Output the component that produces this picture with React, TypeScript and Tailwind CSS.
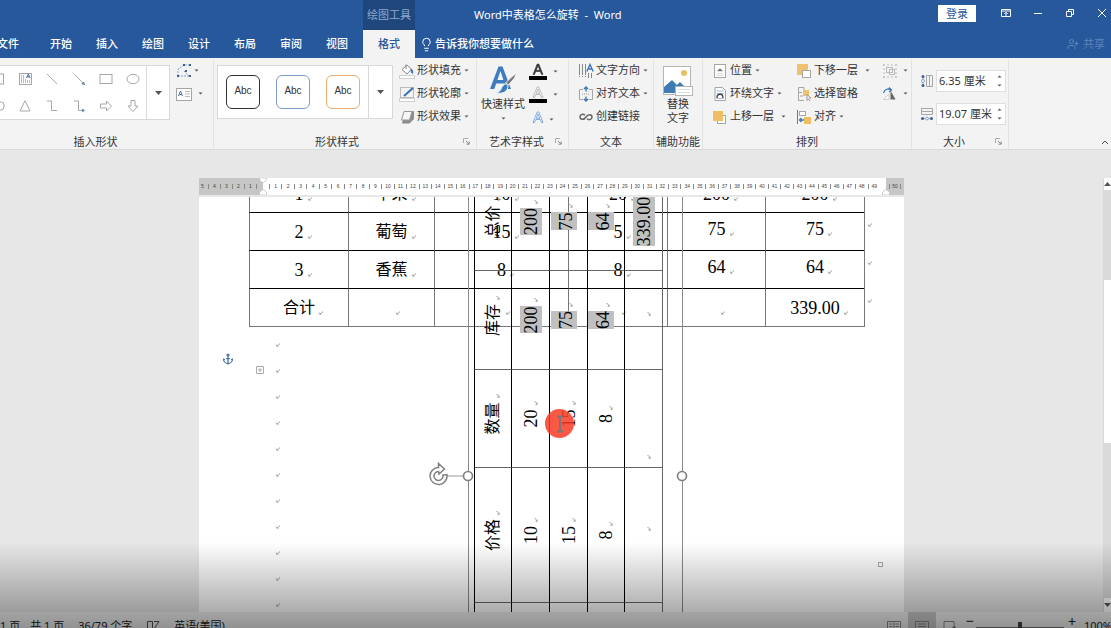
import type { ReactNode } from 'react';
import { Anchor, Lightbulb, UserPlus } from 'lucide-react';

const tabs = ['开始', '插入', '绘图', '设计', '布局', '审阅', '视图'];
const leftTicks = [5, 4, 3, 2, 1];
const rulerTicks = Array.from({ length: 49 }, (_, i) => i + 1);
const paragraphs = Array.from({ length: 12 }, (_, i) => i);

const stockRows = [
  ['1', '苹果', '10', '20', '200', '200'],
  ['2', '葡萄', '15', '5', '75', '75'],
  ['3', '香蕉', '8', '8', '64', '64'],
  ['合计', '', '', '', '', '339.00'],
];

// first column scrolls out of view below the window
const rotatedRows = [
  ['', '价格', '数量', '库存', '总价'],
  ['', '10', '20', '200', '200'],
  ['', '15', '15', '75', '75'],
  ['', '8', '8', '64', '64'],
  ['', '', '', '', '339.00'],
];

function Caret({ className = '' }: { className?: string }) {
  return (
    <svg className={`shrink-0 ${className}`} width="5" height="3" viewBox="0 0 5 3" aria-hidden="true">
      <path d="M0.5 0.5h4L2.5 2.6z" fill="#555" />
    </svg>
  );
}

function BigCaret({ className = '' }: { className?: string }) {
  return (
    <svg className={`shrink-0 ${className}`} width="7" height="4" viewBox="0 0 7 4" aria-hidden="true">
      <path d="M0 0h7L3.5 4z" fill="#555" />
    </svg>
  );
}

function Launcher() {
  return (
    <button aria-label="更多选项" className="absolute right-1.5 bottom-1">
      <svg width="7" height="7" viewBox="0 0 7 7" fill="none" stroke="#aaa">
        <path d="M0.5 5V0.5H5" />
        <path d="M3 3l3 3M6.2 3.5v2.7H3.5" stroke="#888" />
      </svg>
    </button>
  );
}

function Group({ label, className, launcher, children }: { label: string; className: string; launcher?: boolean; children: ReactNode }) {
  return (
    <section className={`relative flex shrink-0 flex-col border-r border-[#e2e2e2] ${className}`}>
      <div className="flex flex-1">{children}</div>
      <h2 className="h-4 text-center leading-[18px]">{label}</h2>
      {launcher && <Launcher />}
    </section>
  );
}

function Item({ icon, label, caret }: { icon: ReactNode; label?: string; caret?: 'near' | 'far' }) {
  return (
    <button className="flex h-[23px] items-center whitespace-nowrap">
      <span className="flex w-[19px] shrink-0 justify-center pr-px">{icon}</span>
      {label}
      {caret && <Caret className={caret === 'far' ? 'ml-[7px]' : 'ml-[3px]'} />}
    </button>
  );
}

function Svg({ children, w = 16, h = 16 }: { children: ReactNode; w?: number; h?: number }) {
  return (
    <svg width={w} height={h} viewBox={`0 0 ${w} ${h}`} fill="none" stroke="#a6a6a6" strokeWidth="1" aria-hidden="true">
      {children}
    </svg>
  );
}

const shapes: ReactNode[] = [
  <rect x="2.5" y="3" width="11" height="10" />,
  <><rect x="2.5" y="2.5" width="12" height="11" /><path d="M4.500 4v8M6.500 4v8M8.500 8v4M10.500 9v3M12.500 9v3" stroke="#bbb" /><path d="M9.500 7l1.800-4L13 7M10 5.800h2.500" stroke="#4a6ea8" /></>,
  <path d="M3 3l10 10" />,
  <><path d="M3 3l9 9" /><path d="M13.500 13.500l-2.500-.8 1.700-1.700z" fill="#7086ad" stroke="#7086ad" /></>,
  <rect x="2" y="3.5" width="12" height="9" />,
  <ellipse cx="8" cy="8" rx="6" ry="4.7" />,
  <rect x="2" y="4" width="12" height="8" rx="3" />,
  <path d="M8 2.8L13 13H3z" />,
  <path d="M3 3h4.500v9.500H13" />,
  <><path d="M3 3h4.500v9.500H12" /><path d="M13.500 12.500l-2-1.200v2.400z" fill="#7086ad" stroke="#7086ad" /></>,
  <path d="M2.500 6h6V3L13.500 8l-5 5v-3h-6z" />,
  <path d="M6 2.500h4v5.500h3L8 13.500 3 8h3z" />,
];

function FillIcon() {
  return (
    <Svg>
      <path d="M3 6.500L8 2l4.500 4L8 11z" fill="#fff" stroke="#888" />
      <path d="M7 6V1.500" stroke="#888" />
      <path d="M12 6c2 1 2 3 1.500 4.500-1-.5-1.500-2-1.500-4.500z" fill="#3d76b8" stroke="#3d76b8" />
      <rect x="0.500" y="12.500" width="15" height="3" fill="#fff" stroke="#d0d0d0" />
    </Svg>
  );
}

function OutlineIcon() {
  return (
    <Svg>
      <rect x="1.500" y="1.500" width="13" height="10" stroke="#bbb" />
      <path d="M5 10l9-8" stroke="#3971b4" strokeWidth="2" />
      <rect x="0.500" y="12.500" width="15" height="3" fill="#fff" stroke="#d0d0d0" />
    </Svg>
  );
}

function EffectIcon() {
  return (
    <Svg>
      <path d="M5 4l10-2v8l-4.500 4.500H3z" fill="#8c8c8c" stroke="none" />
      <path d="M5 2.500h8l-2.500 8.500H2.500z" fill="#f7f7f7" stroke="#999" />
    </Svg>
  );
}

function LetterIcon({ fill, stroke, bar }: { fill: string; stroke: string; bar?: boolean }) {
  return (
    <Svg w={18} h={18}>
      <path d="M4 11.500L8.200 1h1.600l4.200 10.500h-1.500l-1.200-3H6.700l-1.200 3zM7.200 7.300h3.600L9 2.800z" fill={fill} stroke={stroke} strokeWidth="0.600" />
      {bar && <rect x="0" y="13" width="18" height="4" fill="#000" stroke="none" />}
    </Svg>
  );
}

function QuickStyleIcon() {
  return (
    <Svg w={28} h={30}>
      <path d="M1 24L9.500 1.500h4L22 24h-4.400l-1.900-5.500H7.200L5.300 24zM8.400 15h6L11.500 6z" fill="#3d7cc0" stroke="none" />
      <path d="M27.500 8l-2 5-6 7-3-2 6-6z" fill="#777" stroke="#f3f3f3" />
      <path d="M19 20c0 7-5 9-12 8 3-1 4-2 5-4 2-5 5-6 7-4z" fill="#3d7cc0" stroke="#f3f3f3" />
    </Svg>
  );
}

function PictureIcon() {
  return (
    <Svg w={30} h={32}>
      <rect x="0.500" y="1.500" width="27" height="28" fill="#fff" stroke="#b5b5b5" />
      <circle cx="21" cy="8" r="3" fill="#e9bf66" stroke="none" />
      <path d="M1 28V22l8-7 5 5 3-3 8 8v3z" fill="#3e7cb4" stroke="none" />
      <rect x="12.500" y="21.500" width="17" height="9" fill="#fff" stroke="#b5b5b5" />
      <path d="M15 24.500h12M15 27.500h12" stroke="#ddd" />
    </Svg>
  );
}

function TextDirectionIcon() {
  return (
    <Svg>
      <path d="M1.500 1v14M4.500 1v14M7.500 1v14M10.500 10v5M13.500 10v5" stroke="#888" strokeDasharray="11 1 1 1" />
      <path d="M8.800 8.500L12 1.500l3.200 7M10 6h4" stroke="#3d76b8" strokeWidth="1.400" />
    </Svg>
  );
}

function AlignTextIcon() {
  return (
    <Svg>
      <path d="M5 3.500H1.500v10H5M11 3.500h3.500v10H11" />
      <path d="M8 0.500v5M8 10.500v5M6 3l2-2 2 2M6 13l2 2 2-2" stroke="#3d76b8" strokeWidth="1.400" />
      <path d="M4 8h8" stroke="#999" strokeDasharray="1 1" />
    </Svg>
  );
}

function LinkIcon() {
  return (
    <Svg>
      <path d="M7 6.200C5.500 4.800 2 5 2 8s4 3.200 6 0 6-3 6 0-3.500 3.200-5 1.800" stroke="#666" strokeWidth="1.500" />
    </Svg>
  );
}

function PositionIcon({ wrap }: { wrap?: boolean }) {
  return (
    <Svg>
      {wrap ? (
        <>
          <path d="M3 1.500h7.500l3 3v10H3z" fill="#fff" />
          <path d="M4.500 5h7M4.500 7.500h7M4.500 10h7M4.500 12.500h7" stroke="#9fb7d8" />
          <path d="M5 12c0-5 6-5 6 0" fill="#fff" stroke="#444" strokeWidth="1.300" />
        </>
      ) : (
        <>
          <rect x="2.500" y="1.500" width="11" height="13" fill="#fff" />
          <path d="M5.500 8h5L8 5.500z" fill="#666" stroke="#888" strokeWidth="0.500" />
          <path d="M4.500 10.500h7M4.500 12.500h7" stroke="#ddd" />
        </>
      )}
    </Svg>
  );
}

function LayerIcon({ forward }: { forward?: boolean }) {
  return (
    <Svg>
      {forward ? (
        <>
          <rect x="5.500" y="6.500" width="8" height="8" fill="#fff" />
          <rect x="1" y="2" width="10" height="10" fill="#efbe62" stroke="none" />
        </>
      ) : (
        <>
          <rect x="1" y="1" width="11" height="11" fill="#efc271" stroke="none" />
          <rect x="6.500" y="7.500" width="8" height="7" fill="#fff" />
        </>
      )}
    </Svg>
  );
}

function SelectionPaneIcon() {
  return (
    <Svg>
      <path d="M8 1.500H2.500v5H6M2.500 6.500v8H8M8 1.500V4M4 10h3" />
      <rect x="7" y="4" width="6" height="6" fill="#efc271" stroke="none" />
      <path d="M11 8.500v6l1.500-1.500L14 15M11 8.500l4 3.500h-2.500" fill="#fff" stroke="#999" />
    </Svg>
  );
}

function AlignIcon() {
  return (
    <Svg>
      <path d="M1.500 1v14" stroke="#777" />
      <rect x="3.500" y="2.500" width="6" height="4" fill="#fff" />
      <path d="M8 11H3.500M5.500 9l-2 2 2 2" stroke="#3d76b8" strokeWidth="1.300" />
      <rect x="8" y="8" width="7" height="7" fill="#efbe62" stroke="none" />
    </Svg>
  );
}

function GroupIcon() {
  return (
    <Svg>
      <path d="M2 1v14M14 1v14M1 2h14M1 14h14" stroke="#bbb" strokeDasharray="2 2" />
      <rect x="4.500" y="4.500" width="6" height="5" stroke="#bbb" />
      <rect x="7.500" y="6.500" width="5" height="5" stroke="#bbb" />
    </Svg>
  );
}

function RotateIcon() {
  return (
    <Svg>
      <path d="M1.500 7c1-4 5-5 8-3M7 1.500l2.500 2.500L7 6" stroke="#3d76b8" strokeWidth="1.300" />
      <path d="M7 13.500H1.500L7 8z" fill="#fff" stroke="#ccc" />
      <path d="M8.500 4.500v9h5z" fill="#666" stroke="none" />
    </Svg>
  );
}

function SizeField({ id, label, value, wide }: { id: string; label: string; value: string; wide?: boolean }) {
  return (
    <div className="flex items-center">
      <label htmlFor={id} aria-label={label} className="mr-0.5">
        <Svg w={14} h={14}>
          {wide ? (
            <>
              <path d="M1.500 7.500v-6h11v6zM1.500 4.500h11" />
              <path d="M2 11.500h10" stroke="#8ba3c4" />
              <circle cx="2.500" cy="11.500" r="1.500" fill="#3f5f8f" stroke="none" />
              <circle cx="7" cy="11.500" r="1.500" fill="#fff" stroke="#8ba3c4" />
              <circle cx="11.500" cy="11.500" r="1.500" fill="#3f5f8f" stroke="none" />
            </>
          ) : (
            <>
              <path d="M6.500 1.500h6v11h-6zM9.500 1.500v11" />
              <path d="M3 2v10" stroke="#8ba3c4" />
              <circle cx="3" cy="2.500" r="1.500" fill="#3f5f8f" stroke="none" />
              <circle cx="3" cy="7" r="1.500" fill="#fff" stroke="#8ba3c4" />
              <circle cx="3" cy="11.500" r="1.500" fill="#3f5f8f" stroke="none" />
            </>
          )}
        </Svg>
      </label>
      <div className="flex h-[22px] w-[70px] border border-[#dedede] bg-white">
        <input id={id} type="text" defaultValue={value} className="w-[56px] pl-0.5 outline-none" />
        <div className="flex flex-1 flex-col items-center justify-center gap-1.5">
          <button aria-label="增大"><Caret className="rotate-180" /></button>
          <button aria-label="减小"><Caret /></button>
        </div>
      </div>
    </div>
  );
}

// paragraph mark shown after every run of text
function Mark() {
  return (
    <svg width="4" height="4" viewBox="0 0 4 4" fill="none" stroke="#999" strokeWidth="0.8" aria-hidden="true">
      <path d="M3.600 0.400v0.900L0.900 2.900M0.600 1.500v1.700h1.900" />
    </svg>
  );
}

function Run({ text, className = '' }: { text: string; className?: string }) {
  const size = /[0-9]/.test(text) ? 'text-lg' : 'text-base';
  return (
    <span className={`relative inline-block min-h-[22px] align-middle leading-[22px] ${size} ${className}`}>
      {text}
      <span className="absolute bottom-1 left-full ml-1"><Mark /></span>
    </span>
  );
}

function TitleBar() {
  return (
    <div className="flex h-[30px] items-center">
      <div className="ml-[363px] flex h-full w-[52px] items-center justify-center bg-[#1f477d] text-[#8fa9cf]">绘图工具</div>
      <h1 className="ml-[59px] whitespace-pre">Word中表格怎么旋转  -  Word</h1>
      <div className="ml-auto flex items-center pb-1">
        <button className="h-[17px] w-[38px] bg-white leading-[17px] text-[#2a579a]">登录</button>
        <button aria-label="功能区显示选项" className="ml-6">
          <svg width="12" height="12" viewBox="0 0 12 12" fill="none" stroke="#fff"><path d="M1.500 2.500h9v7h-9zM1.500 4h9M6 9V5.500M4.300 7L6 5.300 7.700 7" /></svg>
        </button>
        <button aria-label="最小化" className="ml-5">
          <svg width="12" height="12" viewBox="0 0 12 12" stroke="#fff"><path d="M2 6.500h8" /></svg>
        </button>
        <button aria-label="还原" className="ml-5">
          <svg width="12" height="12" viewBox="0 0 12 12" fill="none" stroke="#fff"><path d="M2.500 4.500h5v5h-5zM4.500 4.500v-2h5v5h-2" /></svg>
        </button>
        <button aria-label="关闭" className="mr-[3px] ml-5">
          <svg width="12" height="12" viewBox="0 0 12 12" stroke="#fff"><path d="M2 2l8 8M10 2l-8 8" /></svg>
        </button>
      </div>
    </div>
  );
}

function TabRow() {
  return (
    <nav className="flex h-7 items-center font-medium">
      <button className="w-[38px] text-left"><span className="-ml-[3px]">文件</span></button>
      {tabs.map((tab) => (
        <button key={tab} className="h-full w-[46px]">{tab}</button>
      ))}
      <button className="ml-[3px] h-full w-[52px] bg-[#f3f3f3] text-[#2a579a]">格式</button>
      <button className="ml-1 flex items-center gap-px">
        <Lightbulb size={15} strokeWidth={1.6} />
        告诉我你想要做什么
      </button>
      <button className="mr-1.5 ml-auto flex items-center gap-1 font-normal text-[#5f84ba]">
        <UserPlus size={12} />
        共享
      </button>
    </nav>
  );
}

function Ribbon() {
  return (
    <div className="relative flex h-[92px] border-b border-[#d9d9d9] bg-[#f3f3f3] pt-px text-[#333]">
      <Group label="插入形状" className="w-[214px] pr-[22px]">
        <div className="mt-1.5 flex h-[55px] w-[170px] shrink-0 overflow-hidden border border-l-0 border-[#d8d8d8] bg-white">
          <div className="-ml-4 grid w-[162px] shrink-0 grid-cols-6 place-items-center">
            {shapes.map((shape, i) => (
              <button key={i} aria-label={`形状 ${i + 1}`}><Svg>{shape}</Svg></button>
            ))}
          </div>
          <button aria-label="更多形状" className="flex flex-1 items-center justify-center border-l border-[#d8d8d8]"><BigCaret /></button>
        </div>
        <div className="ml-1.5 flex shrink-0 flex-col">
          <button aria-label="编辑形状" className="flex h-[23px] items-center gap-0.5">
            <Svg><path d="M2 13V6l6-4h5M2 13h12M8 8l5 5" stroke="#8ba3c4" strokeDasharray="2 1" /><path d="M1 12h2v2H1zM13 12h2v2h-2zM7 1h2v2H7zM13 1h2v2h-2zM9 7h2v2H9z" fill="#3f5f8f" stroke="none" /></Svg>
            <Caret />
          </button>
          <button aria-label="文本框" className="flex h-[23px] items-center gap-1.5">
            <Svg><rect x="0.500" y="2.500" width="15" height="12" fill="#fff" /><path d="M2.500 10l2-5 2 5M3.500 8.500h2" stroke="#4a6ea8" /><path d="M9 5.500h5M9 8h5M9 10.500h5" stroke="#bbb" /></Svg>
            <Caret />
          </button>
        </div>
      </Group>

      <Group label="形状样式" className="w-[263px] pr-4" launcher>
        <div className="mt-1.5 ml-[3px] flex h-[54px] w-[176px] shrink-0 items-center border border-[#d8d8d8] bg-white pl-2 font-['Liberation_Sans',sans-serif] text-[10px]">
          <button className="mr-4 size-[34px] rounded-md border border-[#333] pb-1">Abc</button>
          <button className="mr-4 size-[34px] rounded-md border border-[#7f9cc8] pb-1">Abc</button>
          <button className="size-[34px] rounded-md border border-[#e8ae6e] pb-1">Abc</button>
          <button aria-label="更多样式" className="ml-2 flex h-full flex-1 items-center justify-center border-l border-[#d8d8d8]"><BigCaret /></button>
        </div>
        <div className="ml-[5px] flex flex-col">
          <Item icon={<FillIcon />} label="形状填充" caret="near" />
          <Item icon={<OutlineIcon />} label="形状轮廓" caret="near" />
          <Item icon={<EffectIcon />} label="形状效果" caret="near" />
        </div>
      </Group>

      <Group label="艺术字样式" className="w-[92px] pr-3" launcher>
        <button className="ml-1 flex w-[44px] shrink-0 flex-col items-center pt-1.5 whitespace-nowrap">
          <QuickStyleIcon />
          <span className="leading-[18px]">快速样式</span>
          <Caret className="mt-1" />
        </button>
        <div className="ml-1 flex flex-col pt-px">
          <button aria-label="文本填充" className="flex h-[23px] items-center gap-1.5"><LetterIcon fill="#333" stroke="#333" bar /><Caret /></button>
          <button aria-label="文本轮廓" className="flex h-[23px] items-center gap-1.5"><LetterIcon fill="#fff" stroke="#999" bar /><Caret /></button>
          <button aria-label="文本效果" className="flex h-[23px] items-center gap-0.5 pt-1"><LetterIcon fill="#fff" stroke="#3d7cc0" /><Caret /></button>
        </div>
      </Group>

      <Group label="文本" className="w-[85px]">
        <div className="ml-2 flex flex-col">
          <Item icon={<TextDirectionIcon />} label="文字方向" caret="near" />
          <Item icon={<AlignTextIcon />} label="对齐文本" caret="near" />
          <Item icon={<LinkIcon />} label="创建链接" />
        </div>
      </Group>

      <Group label="辅助功能" className="w-[49px]">
        <button className="flex flex-1 flex-col items-center pt-1.5">
          <PictureIcon />
          <span className="w-6 leading-[14px]">替换文字</span>
        </button>
      </Group>

      <Group label="排列" className="w-[209px]">
        <div className="ml-2 flex w-[84px] shrink-0 flex-col">
          <Item icon={<PositionIcon />} label="位置" caret="near" />
          <Item icon={<PositionIcon wrap />} label="环绕文字" caret="near" />
          <Item icon={<LayerIcon forward />} label="上移一层" caret="far" />
        </div>
        <div className="flex w-[84px] shrink-0 flex-col">
          <Item icon={<LayerIcon />} label="下移一层" caret="far" />
          <Item icon={<SelectionPaneIcon />} label="选择窗格" />
          <Item icon={<AlignIcon />} label="对齐" caret="near" />
        </div>
        <div className="ml-0.5 flex flex-col">
          <Item icon={<GroupIcon />} caret="near" />
          <Item icon={<RotateIcon />} caret="near" />
        </div>
      </Group>

      <Group label="大小" className="w-[97px] pr-3" launcher>
        <div className="ml-2 flex flex-col gap-[11px] pt-[11px]">
          <SizeField id="shape-height" label="高度" value="6.35 厘米" />
          <SizeField id="shape-width" label="宽度" value="19.07 厘米" wide />
        </div>
      </Group>

      <button aria-label="折叠功能区" className="absolute right-0.5 bottom-1">
        <svg width="8" height="6" viewBox="0 0 8 6" fill="none" stroke="#555"><path d="M1 5l3-3 3 3" /></svg>
      </button>
    </div>
  );
}

function Ruler() {
  return (
    <div className="relative flex h-[17px] items-center bg-white font-['Liberation_Sans',sans-serif] text-[5px] leading-none text-[#444]">
      <div className="flex h-full w-16 shrink-0 items-center justify-end overflow-hidden bg-[#c6c6c6] pr-1.5">
        {leftTicks.map((n) => (
          <span key={n} className="w-3 shrink-0 border-r border-[#888] text-center">{n}</span>
        ))}
      </div>
      <div className="flex flex-1 px-1.5">
        {rulerTicks.map((n) => (
          <span key={n} className="flex-1 basis-0 border-l border-[#888] text-center">{n}</span>
        ))}
      </div>
      <div className="flex h-full w-[18px] shrink-0 items-center justify-center bg-[#c6c6c6]">
        <span className="w-3 border-x border-[#888] text-center">50</span>
      </div>
      <svg className="absolute top-0 left-[60px]" width="8" height="17" viewBox="0 0 8 17" fill="#fff" stroke="#bbb" strokeWidth="0.7">
        <path d="M0.500 0h7v2L4 5 0.500 2zM0.500 17v-3L4 11.500 7.500 14v3z" />
      </svg>
      <svg className="absolute right-[14px] bottom-0" width="8" height="6" viewBox="0 0 8 6" fill="#fff" stroke="#bbb" strokeWidth="0.7">
        <path d="M0.500 6V3L4 0.500 7.500 3v3z" />
      </svg>
    </div>
  );
}

function StockTable() {
  return (
    <table className="-mt-[23px] ml-[50px] w-[616px] table-fixed border-separate border-spacing-0 border-r border-b border-[#777] text-center">
      <colgroup>
        <col className="w-[99px]" />
        <col className="w-[86px]" />
        <col className="w-[134px]" />
        <col className="w-[99px]" />
        <col className="w-[98px]" />
        <col className="w-[99px]" />
      </colgroup>
      <tbody>
        {stockRows.map((row, r) => (
          <tr key={r}>
            {row.map((cell, c) => (
              <td key={c} className={`relative h-[38px] border-t border-l border-t-black border-l-[#777] p-0 ${c > 3 && (r === 1 || r === 2) ? 'pb-1.5' : ''}`}>
                <Run text={cell} />
                {c === 5 && <span className="absolute top-2.5 -right-2"><Mark /></span>}
              </td>
            ))}
          </tr>
        ))}
      </tbody>
    </table>
  );
}

function rotatedCellClass(r: number, c: number) {
  const height = r === 0 || r === 3 ? 'h-[37px]' : 'h-[38px]';
  if (c > 2 && (r === 2 || r === 3)) return `${height} pb-2.5`;
  if (r === 4 && c === 2) return `${height} pl-1 text-left`;
  return height;
}

function selectionClass(r: number, c: number, cell: string) {
  if (c < 3 || r === 0 || cell === '') return '';
  return r === 2 || r === 3 ? 'bg-[#c0c0c0] pt-1' : 'bg-[#c0c0c0]';
}

function RotatedTextBox() {
  return (
    <div className="absolute -top-2 -bottom-2 left-[269px] w-[215px] border-x border-[#8a8a8a]">
      <table className="absolute top-[514px] left-[5px] w-[531px] origin-top-left -rotate-90 table-fixed border-separate border-spacing-0 border-r border-b border-[#666] text-center">
        <colgroup>
          <col className="w-[100px]" />
          <col className="w-[135px]" />
          <col className="w-[98px]" />
          <col className="w-[99px]" />
          <col className="w-[98px]" />
        </colgroup>
        <tbody>
          {rotatedRows.map((row, r) => (
            <tr key={r}>
              {row.map((cell, c) => (
                <td key={c} className={`border-t border-l border-t-black border-l-[#666] p-0 ${rotatedCellClass(r, c)}`}>
                  <Run text={cell} className={selectionClass(r, c, cell)} />
                </td>
              ))}
            </tr>
          ))}
        </tbody>
      </table>
      <svg className="absolute top-[273px] -left-[40px]" width="46" height="28" viewBox="0 0 46 28" fill="none" stroke="#808080" aria-hidden="true">
        <path d="M18 14h16" stroke="#999" />
        <circle cx="39" cy="14" r="4.500" fill="#fff" strokeWidth="1.700" />
        <path d="M9.500 5.500A8.500 8.500 0 1 0 17.900 12.500L13.900 13.200A4.500 4.500 0 1 1 9.500 9.500L10 12L15.500 7L9.500 1.500z" fill="#fff" strokeWidth="1.500" />
      </svg>
      <svg className="absolute top-[281px] -right-1.5" width="12" height="12" viewBox="0 0 12 12" fill="#fff" stroke="#808080" strokeWidth="1.7" aria-hidden="true">
        <circle cx="6" cy="6" r="4.500" />
      </svg>
    </div>
  );
}

function Page() {
  return (
    <div className="relative mt-0.5 flex-1 overflow-hidden bg-white font-['Liberation_Serif','Noto_Sans_CJK_SC',serif] text-black">
      <StockTable />
      <div className="ml-[77px] flex flex-col pt-[5px]">
        {paragraphs.map((n) => (
          <p key={n} className="flex h-[26px] items-center"><Mark /></p>
        ))}
      </div>
      <Anchor className="absolute top-[156px] left-[23px] text-[#4a76ab]" size={12} strokeWidth={2.5} />
      <svg className="absolute top-[169px] left-[57px]" width="8" height="8" viewBox="0 0 8 8" fill="none" stroke="#aaa">
        <path d="M0.500 0.500h7v7h-7zM4 2v4M2 4h4" />
      </svg>
      <span className="absolute top-[365px] left-[679px] size-[5px] border border-[#aaa]" />
      <RotatedTextBox />
      <div className="absolute top-[212px] left-[346px] flex size-[29px] items-center justify-center rounded-full bg-[#fb3b26]/85">
        <svg width="8" height="18" viewBox="0 0 8 18" fill="none" stroke="#777" strokeWidth="2"><path d="M1 1.500h2l1 1 1-1h2M4 2.500v13M1 16.500h2l1-1 1 1h2" /></svg>
      </div>
    </div>
  );
}

function StatusBar() {
  return (
    <footer className="flex h-4 shrink-0 overflow-hidden bg-[#f3f3f3] leading-7 text-[#222]">
      <span>1 页</span>
      <span className="ml-2.5">共 1 页</span>
      <span className="ml-3.5">36/79 个字</span>
      <svg className="mt-2 ml-3.5" width="14" height="12" viewBox="0 0 14 12" fill="none" stroke="#555"><path d="M6.500 11V1.500h-5V11M8 1.500h5L8 9" /></svg>
      <span className="ml-3.5">英语(美国)</span>
      <div className="ml-auto flex">
        <button aria-label="阅读视图" className="flex w-7 justify-center pt-2">
          <svg width="14" height="12" viewBox="0 0 14 12" fill="none" stroke="#888"><path d="M0.500 1.500H7V11M7 1.500h6.500V11M0.500 1.500V11M2 4h3.500M2 6.500h3.500M8.500 4H12M8.500 6.500H12" /></svg>
        </button>
        <button aria-label="页面视图" className="flex w-7 justify-center bg-[#c9c9c9] pt-2">
          <svg width="14" height="12" viewBox="0 0 14 12" fill="none" stroke="#888"><path d="M0.500 11V1.500h13V11M3 4h8M3 6.500h8" /></svg>
        </button>
        <button aria-label="Web 视图" className="flex w-7 justify-center pt-2">
          <svg width="14" height="12" viewBox="0 0 14 12" fill="none" stroke="#888"><path d="M1 11V1.500h10V6" /><path d="M5 11l7-5v5z" fill="#444" /></svg>
        </button>
        <button aria-label="缩小" className="ml-0.5 h-4 text-sm leading-[18px]">−</button>
        <input type="range" aria-label="缩放" defaultValue={50} className="mt-2.5 mr-1 ml-0.5 h-2.5 w-[88px] appearance-none bg-[linear-gradient(#777,#777)] bg-[length:100%_1px] bg-center bg-no-repeat [&::-webkit-slider-thumb]:h-2.5 [&::-webkit-slider-thumb]:w-1 [&::-webkit-slider-thumb]:appearance-none [&::-webkit-slider-thumb]:bg-[#444]" />
        <button aria-label="放大" className="h-4 text-sm leading-5">+</button>
        <span className="-mr-px ml-2">100%</span>
      </div>
    </footer>
  );
}

export default function App() {
  return (
    <div className="relative flex h-screen flex-col overflow-hidden font-['Noto_Sans','Noto_Sans_CJK_SC',sans-serif] text-[11px]">
      <header className="shrink-0 bg-[#26589b] text-white">
        <TitleBar />
        <TabRow />
        <Ribbon />
      </header>
      <main className="flex min-h-0 flex-1 bg-[#e7e7e7] pt-7">
        <div className="flex min-w-0 flex-1 justify-center">
          <div className="flex w-[705px] flex-col">
            <Ruler />
            <Page />
          </div>
        </div>
        <div className="flex w-2 shrink-0 flex-col border-l border-[#d8d8d8] bg-[#dadada]">
          <button aria-label="向上滚动" className="flex h-3 w-full items-center justify-center bg-white"><BigCaret className="rotate-180" /></button>
          <div className="mt-[90px] h-[163px] w-full bg-white" />
          <button aria-label="向下滚动" className="mt-auto flex h-3.5 w-full items-center justify-center bg-white"><BigCaret /></button>
        </div>
      </main>
      <StatusBar />
      <div className="pointer-events-none absolute inset-x-0 bottom-0 h-[86px] bg-linear-to-b from-transparent to-black/40" />
    </div>
  );
}
